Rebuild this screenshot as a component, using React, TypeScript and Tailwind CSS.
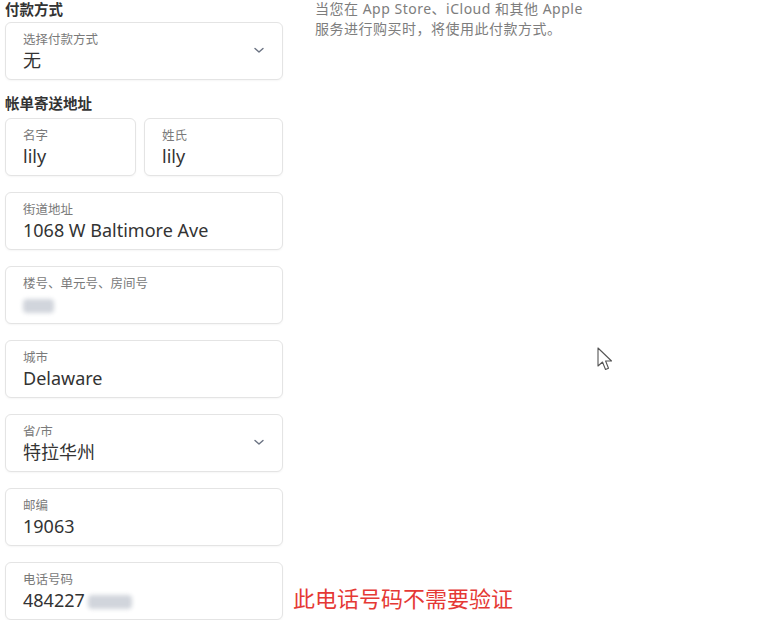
import React from "react";

const font = { fontFamily: "'Noto Sans', 'Noto Sans CJK SC', sans-serif" };

const Chevron = () => (
  <svg width="14" height="14" viewBox="0 0 14 14" className="text-gray-500">
    <path d="M3 5.5 L7 9 L11 5.5" fill="none" stroke="currentColor" strokeWidth="1.4" strokeLinecap="round" strokeLinejoin="round" />
  </svg>
);

const Blur = ({ w }: { w: string }) => (
  <span className={`inline-block h-[14px] ${w} bg-gray-300 blur-[2px] rounded-sm align-middle`} />
);

interface FieldProps {
  label: string;
  value?: React.ReactNode;
  select?: boolean;
  className?: string;
}

const Field: React.FC<FieldProps> = ({ label, value, select, className = "w-full" }) => (
  <div
    className={`${className} h-[58px] shrink-0 rounded-md border border-[#e4e4e4] bg-white shadow-[0_1px_2px_rgba(0,0,0,0.04)] flex items-center pl-[17px] pr-[16px]`}
  >
    <div className="flex-1 flex flex-col pt-[1px]">
      <span className="text-[12.5px] leading-[15px] text-[#7a7a7a]">{label}</span>
      <span className="mt-[2px] text-[18px] leading-[22px] text-[#333]">{value}</span>
    </div>
    {select && (
      <div className="mb-[2px]">
        <Chevron />
      </div>
    )}
  </div>
);

export default function App() {
  return (
    <div className="relative w-[760px] h-[620px] overflow-hidden bg-white" style={font}>
      <div className="flex">
        <div className="w-[278px] ml-[5px] flex flex-col">
          <h2 className="text-[14.5px] leading-[18px] font-bold text-[#333]">付款方式</h2>
          <div className="mt-[4px]">
            <Field label="选择付款方式" value="无" select />
          </div>
          <h2 className="mt-[15px] text-[14.5px] leading-[17px] font-bold text-[#333]">帐单寄送地址</h2>
          <div className="mt-[6px] flex flex-col gap-[16px]">
            <div className="flex gap-[8px]">
              <Field label="名字" value="lily" className="w-[131px]" />
              <Field label="姓氏" value="lily" className="w-[139px]" />
            </div>
            <Field label="街道地址" value="1068 W Baltimore Ave" />
            <Field label="楼号、单元号、房间号" value={<Blur w="w-[31px]" />} />
            <Field label="城市" value="Delaware" />
            <Field label="省/市" value="特拉华州" select />
            <Field label="邮编" value="19063" />
            <div className="flex items-center whitespace-nowrap">
              <Field
                label="电话号码"
                value={
                  <span className="flex items-center">
                    484227
                    <span className="ml-[3px]">
                      <Blur w="w-[44px]" />
                    </span>
                  </span>
                }
                className="w-[278px]"
              />
              <span className="ml-[10px] mt-[14px] text-[22px] leading-[28px] text-[#e53935]">
                此电话号码不需要验证
              </span>
            </div>
          </div>
        </div>
        <div className="ml-[32px] -mt-[1px] text-[14px] leading-[20px] tracking-[0.5px] text-[#7d7d7d]">
          <p>当您在 App Store、iCloud 和其他 Apple</p>
          <p>服务进行购买时，将使用此付款方式。</p>
        </div>
      </div>
      <svg
        className="absolute left-[597px] top-[347px]"
        width="18"
        height="26"
        viewBox="0 0 18 26"
      >
        <path
          d="M1 1 L1 19 L5.5 15 L8.5 22.5 L11.5 21.2 L8.6 14 L14.5 14 Z"
          fill="white"
          stroke="#555"
          strokeWidth="1.1"
          strokeLinejoin="round"
        />
      </svg>
    </div>
  );
}
